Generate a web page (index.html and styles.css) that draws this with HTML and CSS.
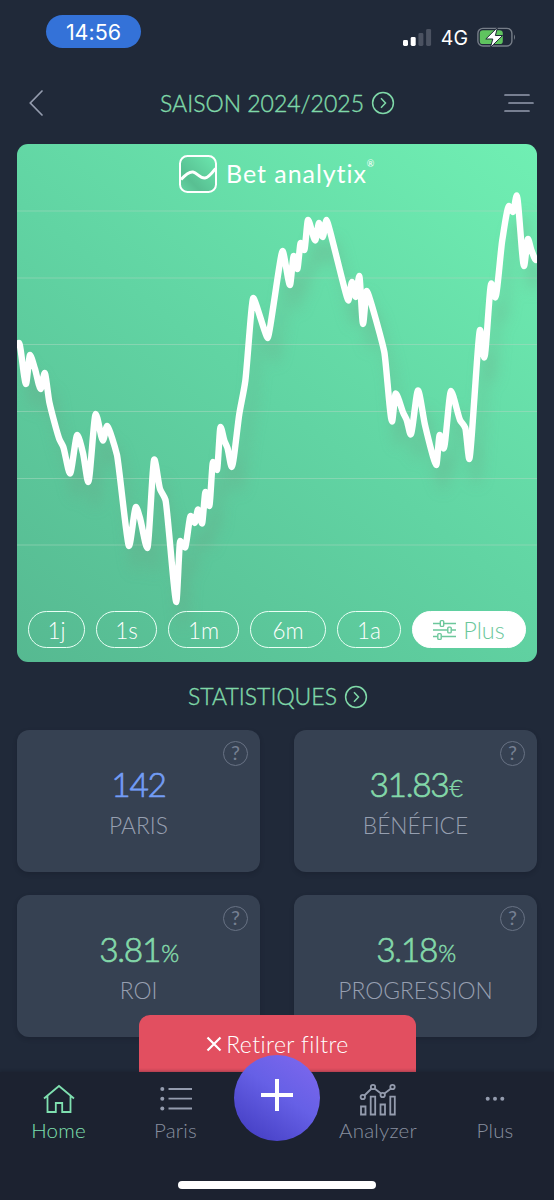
FILE: index.html
```html
<!DOCTYPE html>
<html lang="fr">
<head>
  <meta charset="UTF-8" />
  <meta name="viewport" content="width=device-width, initial-scale=1.0"/>
  <title>Bet analytix</title>
  <link rel="stylesheet" href="styles.css">
</head>
<body>
  <div class="statusbar">
    <span class="time">14:56</span>
    <div class="status-right">
      <svg width="29" height="19" viewBox="0 0 29 19">
        <rect x="0" y="12" width="5" height="6" rx="1.4" fill="#fff"/>
        <rect x="7.7" y="9" width="5" height="9" rx="1.4" fill="#fff"/>
        <rect x="15.4" y="5" width="5" height="13" rx="1.4" fill="#4b5261"/>
        <rect x="23.1" y="1" width="5" height="17" rx="1.4" fill="#4b5261"/>
      </svg>
      <span class="network">4G</span>
      <svg width="39" height="21" viewBox="0 0 39 21">
        <rect x=".9" y="1.4" width="34" height="17.6" rx="5" fill="none" stroke="#767d88" stroke-width="1.4"/>
        <path d="M37 7.5q2 2.7 0 5.4z" fill="#767d88"/>
        <rect x="2.8" y="3.3" width="23" height="13.8" rx="3.2" fill="#5fc45f"/>
        <path d="M20.500.4 8.800 12h7l-2.400 8.500L25.600 8.500h-7.200z" fill="#fff" stroke="#202939" stroke-width="1"/>
      </svg>
    </div>
  </div>

  <header class="topbar">
    <svg width="14" height="26" viewBox="0 0 14 26" class="line-icon"><path d="M13 1 1.300 13 13 25"/></svg>
    <h1 class="link-title season">
      <span>SAISON 2024/2025</span>
      <svg width="24" height="24" viewBox="0 0 24 24"><circle cx="12" cy="12" r="10.400"/><path d="m10 7.200 4.500 4.800-4.500 4.800"/></svg>
    </h1>
    <svg width="30" height="20" viewBox="0 0 30 20" class="line-icon"><path d="M1 2h24M5 10h24M1 18h24"/></svg>
  </header>

  <section class="chart">
    <svg class="plot" viewBox="17 144 520 518">
      <path class="grid" d="M17 211h520M17 278h520M17 344.500h520M17 411.500h520M17 478.500h520M17 545h520"/>
      <path class="curve" id="curve"/>
    </svg>
    <div class="brand">
      <svg width="38" height="38" viewBox="0 0 38 38">
        <defs>
          <linearGradient id="logo" x1="0" y1="1" x2="1" y2="0">
            <stop offset="0" stop-color="#66d6a4"/><stop offset=".3" stop-color="#58bf92"/><stop offset="1" stop-color="#6ce8af"/>
          </linearGradient>
        </defs>
        <rect x="1" y="1" width="36" height="36" rx="7.500" fill="url(#logo)" stroke="#fff" stroke-width="2"/>
        <path d="M2 24.500C7 19 11 16.500 14 17c4 .6 7 6.500 12 6 3.500-.4 7-5 10.500-9.500" fill="none" stroke="#fff" stroke-width="3"/>
      </svg>
      <span class="brand-name">Bet analytix</span><span class="reg">®</span>
    </div>
    <div class="ranges">
      <button class="range r-1j">1j</button>
      <button class="range r-1s">1s</button>
      <button class="range r-1m">1m</button>
      <button class="range r-6m">6m</button>
      <button class="range r-1a">1a</button>
      <button class="range r-plus">
        <svg width="24" height="22" viewBox="0 0 24 22"><path d="M0 4.500h7M11 4.500h12M0 11h14.500M18.500 11H23M0 17.500h4.500M8.500 17.500H23"/><rect x="7.300" y="1.600" width="3.400" height="5.800" rx="1"/><rect x="14.800" y="8.100" width="3.400" height="5.800" rx="1"/><rect x="4.800" y="14.600" width="3.400" height="5.800" rx="1"/></svg>
        <span>Plus</span>
      </button>
    </div>
  </section>

  <h2 class="link-title stats-title">
    <span>STATISTIQUES</span>
    <svg width="24" height="24" viewBox="0 0 24 24"><circle cx="12" cy="12" r="10.400"/><path d="m10 7.200 4.500 4.800-4.500 4.800"/></svg>
  </h2>

  <section class="stats">
    <div class="card">
      <span class="help">?</span>
      <div class="value blue">142</div>
      <div class="label">PARIS</div>
    </div>
    <div class="card">
      <span class="help">?</span>
      <div class="value">31.83<small>€</small></div>
      <div class="label">BÉNÉFICE</div>
    </div>
    <div class="card">
      <span class="help">?</span>
      <div class="value">3.81<small>%</small></div>
      <div class="label">ROI</div>
    </div>
    <div class="card">
      <span class="help">?</span>
      <div class="value">3.18<small>%</small></div>
      <div class="label">PROGRESSION</div>
    </div>
  </section>

  <button class="clear-filter">
    <svg width="16" height="16" viewBox="0 0 16 16"><path d="m1.500 1.500 13 13m0-13-13 13"/></svg>
    <span>Retirer filtre</span>
  </button>

  <nav class="tabbar">
    <a class="tab active">
      <svg width="32" height="30" viewBox="0 0 32 30"><path d="M1 14.500 16 2l15 12.500M4.500 12v16h8.300v-9h6.400v9h8.300V12"/></svg>
      <span>Home</span>
    </a>
    <a class="tab">
      <svg width="32" height="30" viewBox="0 0 32 30"><path d="M8.500 5H32M8.500 14.700H32M8.500 24.500H32"/><g class="dot"><circle cx="2.300" cy="5" r="2"/><circle cx="2.300" cy="14.700" r="2"/><circle cx="2.300" cy="24.500" r="2"/></g></svg>
      <span>Paris</span>
    </a>
    <a class="add"><svg width="34" height="34" viewBox="0 0 34 34"><path d="M17 1v32M1 17h32"/></svg></a>
    <a class="tab analyzer">
      <svg width="38" height="34" viewBox="0 0 38 34"><path d="M2 24.500h4.500v8H2zM11.700 14.700h4.500v17.800h-4.500zM21.500 22.500H26v10h-4.500zM31.300 14.700h4.500v17.800h-4.500zM5.400 13.500l7.200-7M15.500 6.500l6.500 5M25.500 11.500l6.500-5"/><circle cx="3.800" cy="15" r="2.200"/><circle cx="14" cy="5" r="2.200"/><circle cx="23.700" cy="13" r="2.200"/><circle cx="33.500" cy="5" r="2.200"/></svg>
      <span>Analyzer</span>
    </a>
    <a class="tab">
      <svg width="20" height="30" viewBox="0 0 20 30"><g class="dot"><circle cx="2.700" cy="14.700" r="2"/><circle cx="10" cy="14.700" r="2"/><circle cx="17.300" cy="14.700" r="2"/></g></svg>
      <span>Plus</span>
    </a>
    <div class="home-indicator"></div>
  </nav>

  <script src="chart.js"></script>
</body>
</html>
```
FILE: styles.css
```css
* {
  box-sizing: border-box;
}
body {
  margin: 0;
  width: 554px;
  height: 1200px;
  overflow: hidden;
  position: relative;
  background: #202939;
  color: #fff;
  font-family: Lato, "Open Sans", sans-serif;
  font-weight: 300;
  font-variant-ligatures: none;
}
button {
  font: inherit;
  font-variant-ligatures: none;
  color: inherit;
  border: none;
  padding: 0;
}
svg {
  display: block;
  flex: none;
}
.statusbar {
  height: 64px;
  padding: 15px 38px 0 46px;
  display: flex;
  justify-content: space-between;
  font-family: Inter, sans-serif;
}
.time {
  width: 95px;
  height: 33px;
  border-radius: 17px;
  background: #3472d8;
  font-size: 21.5px;
  font-weight: 400;
  line-height: 34px;
  text-align: center;
}
.status-right {
  display: flex;
  align-items: center;
  height: 45px;
}
.network {
  margin: 0 9px 0 9px;
  font-size: 19.5px;
  font-weight: 400;
}
.topbar {
  height: 80px;
  padding: 0 20px 3px 29px;
  display: flex;
  align-items: center;
  justify-content: space-between;
}
.line-icon {
  fill: none;
  stroke: #949cae;
  stroke-width: 1.7;
  stroke-linecap: round;
}
.link-title {
  margin: 0;
  display: flex;
  align-items: center;
  justify-content: center;
  gap: 7px;
  color: #7fd8a8;
  font-size: 23px;
  font-weight: 300;
  line-height: 28px;
  -webkit-text-stroke: .4px;
}
.season {
  margin-left: 8px;
}
.link-title span {
  position: relative;
  top: -1px;
}
.season span {
  top: 0;
}
.link-title svg {
  fill: none;
  stroke: #7fd8a8;
  stroke-width: 1.5;
}
.chart {
  position: relative;
  margin: 0 17px;
  height: 518px;
  border-radius: 11px;
  overflow: hidden;
  background: linear-gradient(38deg, #56b991 0%, #61d4a3 50%, #70efb3 100%);
  display: flex;
  flex-direction: column;
  justify-content: space-between;
}
.plot {
  position: absolute;
  inset: 0;
}
.grid {
  stroke: #a6d9c0;
  stroke-opacity: .55;
  stroke-width: 1;
}
.curve {
  fill: none;
  stroke: #fff;
  stroke-width: 6.4;
  stroke-linecap: round;
  stroke-linejoin: round;
  filter: drop-shadow(7px 22px 7px rgba(110, 150, 125, .28));
}
.brand {
  position: relative;
  display: flex;
  padding: 11px 0 0 162px;
}
.brand-name {
  margin-left: 9px;
  font-size: 25px;
  font-weight: 400;
  line-height: 37px;
  letter-spacing: .95px;
}
.reg {
  font-size: 9px;
  font-weight: 400;
  line-height: 18px;
}
.ranges {
  position: relative;
  display: flex;
  gap: 11px;
  padding: 0 11px 14px;
}
.range {
  height: 37px;
  border: 1.5px solid #eafff5;
  border-radius: 19px;
  background: none;
  font-size: 22.5px;
  padding-top: 1px;
}
.r-1j { width: 57px; }
.r-1s { width: 61px; }
.r-1m { width: 71px; }
.r-6m { width: 76px; }
.r-1a { width: 64px; }
.r-plus {
  width: 114px;
  padding: 0;
  display: flex;
  align-items: center;
  justify-content: center;
  gap: 6px;
  background: #fff;
  border-color: #fff;
  color: #6cc79b;
  font-size: 23.5px;
}
.r-plus svg {
  fill: none;
  stroke: #6cc79b;
  stroke-width: 1.4;
}
.stats-title {
  height: 68px;
  padding-top: 2px;
  padding-left: 2px;
}
.stats {
  padding: 0 17px;
  display: grid;
  grid-template-columns: 243px 243px;
  gap: 23px 34px;
}
.card {
  position: relative;
  height: 142px;
  border-radius: 12px;
  background: #364152;
  box-shadow: 0 2px 4px rgba(15, 20, 30, .25);
  text-align: center;
  padding-top: 33px;
}
.help {
  position: absolute;
  top: 11px;
  right: 12px;
  width: 25px;
  height: 25px;
  border: 1.7px solid #687284;
  border-radius: 50%;
  color: #768092;
  font-size: 20px;
  font-weight: 400;
  line-height: 21px;
}
.value {
  height: 42px;
  line-height: 42px;
  color: #83d8a9;
  font-size: 33.5px;
  font-weight: 300;
  letter-spacing: -1.3px;
  -webkit-text-stroke: .7px;
}
.value small {
  margin-left: 1px;
  font-size: 23px;
  -webkit-text-stroke: .5px;
}
.value.blue {
  color: #739df5;
}
.label {
  margin-top: 6px;
  line-height: 28px;
  font-size: 22.8px;
  color: #969fb0;
}
.clear-filter {
  position: absolute;
  left: 139px;
  top: 1015px;
  width: 277px;
  height: 62px;
  padding-bottom: 4px;
  border-radius: 11px 11px 0 0;
  background: #e24f60;
  display: flex;
  align-items: center;
  justify-content: center;
  gap: 4px;
  font-size: 23px;
  letter-spacing: .4px;
}
.clear-filter svg {
  fill: none;
  stroke: #fff;
  stroke-width: 2.2;
}
.tabbar {
  position: absolute;
  left: 0;
  bottom: 0;
  width: 554px;
  height: 128px;
  background: #1c2230;
  box-shadow: 0 -1px 3px rgba(15, 20, 30, .3);
  display: grid;
  grid-template-columns: 117px 117px 86px 116px 118px;
  color: #878f9f;
}
.tab {
  display: flex;
  flex-direction: column;
  align-items: center;
  justify-content: space-between;
  height: 76px;
  padding: 12px 0 6px;
  font-size: 20.5px;
  line-height: 24px;
  letter-spacing: .2px;
}
.tab.analyzer {
  padding-top: 10px;
}
.tab svg {
  fill: none;
  stroke: #949cae;
  stroke-width: 1.8;
}
.tab .dot {
  fill: #949cae;
  stroke: none;
}
.tab.active {
  color: #7fe0b0;
}
.tab.active svg {
  stroke: #7fe0b0;
}
.add {
  width: 86px;
  height: 86px;
  margin-top: -17px;
  border-radius: 50%;
  background: linear-gradient(35deg, #4640c5 10%, #6660e6 55%, #8068ee 100%);
  display: flex;
  align-items: center;
  justify-content: center;
  padding-bottom: 6px;
}
.add svg {
  fill: none;
  stroke: #fff;
  stroke-width: 4;
}
.home-indicator {
  position: absolute;
  left: 178px;
  bottom: 11px;
  width: 198px;
  height: 8px;
  border-radius: 4px;
  background: #fff;
}
```
FILE: chart.js
```js
const points = [
  [19,343],[26,384],[30,355],[35,369],[40.7,389],[44.7,373],[49.3,402],[59.3,439],[63.3,447],[70,473.5],
  [77.3,435],[83,453],[88.3,482],[95.7,414],[103,440.5],[107,426],[117,455],[129,546],[136,507],[140,518],
  [147.3,548],[154.3,459.5],[160,489],[165.5,500],[176.3,602],[180.2,541],[185,547.5],[190.7,516],[194.7,523],
  [198,509.5],[202,523.5],[205.5,492],[209.3,506],[213,462],[217,470],[220.5,427],[224.5,441],[227.5,448],
  [231.7,467],[239.3,414],[245.3,381],[253.3,298],[267.7,338],[282.5,251],[290,285],[293.7,256],[297.3,269],
  [300.7,243],[304.3,250],[308,220],[315.3,240.5],[319,223],[322.7,237],[326.5,220],[348.3,300.5],[352,282],
  [355.7,297],[359.3,276],[363,324],[366.7,291],[384.3,352],[392,421.5],[395.7,393.5],[403.3,413],[406.7,420],
  [410.7,434.5],[418,390.5],[425,425],[436.3,465],[439.7,435],[443.7,448.5],[451,391],[460,420],[465.3,428],
  [469.3,459],[480,330],[484.3,357.5],[491.3,283.5],[495.3,297.5],[502.3,240],[509,206],[513,212],[516.7,195.5],
  [524,266],[528,239],[531.3,250],[536,260]
];

// slope at each point, flat on the peaks
function slope(i) {
  const p = points[i - 1], c = points[i], n = points[i + 1];
  if (!p || !n) return 0;
  const a = (c[1] - p[1]) / (c[0] - p[0]);
  const b = (n[1] - c[1]) / (n[0] - c[0]);
  return a * b <= 0 ? 0 : 2 * a * b / (a + b);
}

let d = "M" + points[0];
for (let i = 1; i < points.length; i++) {
  const [x0, y0] = points[i - 1];
  const [x1, y1] = points[i];
  const h = Math.min((x1 - x0) / 4, 1.8);
  d += `C${x0 + h},${y0 + h * slope(i - 1)} ${x1 - h},${y1 - h * slope(i)} ${x1},${y1}`;
}
document.getElementById("curve").setAttribute("d", d);
```
